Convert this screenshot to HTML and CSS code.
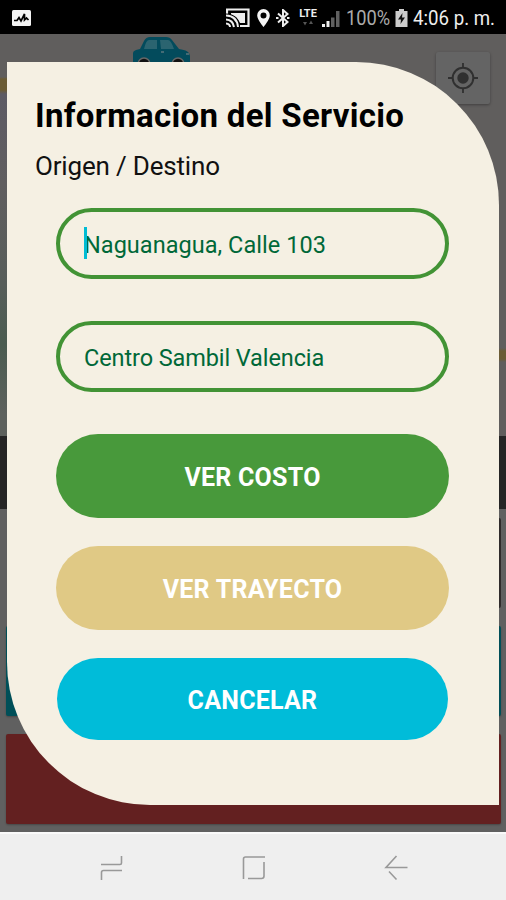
FILE: index.html
```
<!DOCTYPE html>
<html lang="es">
    <head>
        <meta charset="utf-8">
        <meta name="viewport" content="width=device-width, initial-scale=1">
        <title>Informacion del Servicio</title>

        <link rel="stylesheet" href="styles.css">
    </head>

    <body>
        <header class="status">
            <svg class="gallery" width="19" height="16" viewBox="0 0 19 16">
                <rect width="19" height="16" rx="1.5" fill="#f4f4f4"/>
                <path d="M2 10.500h3l2-3 2 3.500 3.500-7v6l2-2 2 2" fill="none" stroke="#000" stroke-width="1.700"/>
            </svg>
            <svg class="cast" width="24" height="20" viewBox="0 0 24 20">
                <path d="M1 7V1.500h21.500V18H14" fill="none" stroke="#eee" stroke-width="2.200"/>
                <path d="M5 5h14v10h-5Q11 8 5 7z" fill="#eee"/>
                <path d="M0 7.500Q11 8 12 19M0 11.500Q7 12 8 19M0 15.500Q4 16 4 19" fill="none" stroke="#000" stroke-width="4"/>
                <path d="M0 7.500Q11 8 12 19M0 11.500Q7 12 8 19M0 15.500Q4 16 4 19" fill="none" stroke="#eee" stroke-width="2"/>
            </svg>
            <svg class="pin" width="13" height="18" viewBox="0 0 13 18">
                <path d="M6.500 0a6.300 6.300 0 0 0-6.300 6.500C.2 10.500 6.500 18 6.500 18s6.300-7.500 6.300-11.500A6.300 6.300 0 0 0 6.500 0zm0 3.500a3 3 0 1 1 0 6 3 3 0 0 1 0-6z" fill="#f4f4f4"/>
            </svg>
            <svg class="bluetooth" width="14" height="18" viewBox="0 0 14 18">
                <path d="M2 4.500l9.500 8.500-4.500 4V1l4.500 4L2 13.500" fill="none" stroke="#eee" stroke-width="2"/>
                <path d="M0 9h2.500M11 9h2.500" stroke="#eee" stroke-width="2"/>
            </svg>
            <span class="lte">
                <b>LTE</b>
                <svg width="10" height="6" viewBox="0 0 10 6">
                    <path d="M0 2h4L2 5.500zM6 4h4L8 .5z" fill="#555"/>
                </svg>
            </span>
            <svg class="signal" width="18" height="17" viewBox="0 0 18 17">
                <path d="M0 14h3v3H0zM4.500 11h3v6h-3z" fill="#eee"/>
                <path d="M9 7.500h3.500V17H9zM14 1h3.500v16H14z" fill="#606060"/>
            </svg>
            <span class="percent"><span>100%</span></span>
            <svg class="battery" width="13" height="18" viewBox="0 0 13 18">
                <path d="M4 0h5v2h3.500v16H.5V2H4z" fill="#ccc"/>
                <path d="M7.500 4L3 10.500h3L5.500 15 10 8.500H7z" fill="#111"/>
            </svg>
            <span class="time"><span>4:06 p. m.</span></span>
        </header>

        <main class="screen">
            <div class="map">
                <svg class="car" width="60" height="32" viewBox="0 0 60 32">
                    <path d="M1 29V17q0-2 3-3l4-1 4-8q2-4 6-4h16q4 0 6 3l7 9q8 1 10 4l1 3v7q0 3-3 3H4q-3 0-3-3z" fill="#034b5c"/>
                    <path d="M12 13q2-9 5-9h8v9zM28 4h8q3 0 6 9H29z" fill="#2b6470"/>
                    <path d="M54 18h3M29 16h3" stroke="#5b777e" stroke-width="1.500"/>
                    <circle cx="12" cy="28" r="6" fill="#111" stroke="#666" stroke-width="1.500"/>
                    <circle cx="46" cy="28" r="6" fill="#111" stroke="#666" stroke-width="1.500"/>
                </svg>
                <div class="locate">
                    <svg width="30" height="30" viewBox="0 0 30 30">
                        <circle cx="15" cy="15" r="10.300" fill="none" stroke="#303030" stroke-width="2"/>
                        <circle cx="15" cy="15" r="5.700" fill="#303030"/>
                        <path d="M15 0v5M15 25v5M0 15h5M25 15h5" stroke="#303030" stroke-width="1.800"/>
                    </svg>
                </div>
            </div>
            <div class="bar"></div>
            <div class="options">
                <div class="option grey"></div>
                <div class="option teal"></div>
                <div class="option red"></div>
            </div>

            <section class="dialog">
                <h1>Informacion del Servicio</h1>
                <h2>Origen / Destino</h2>
                <div class="field focused"><span class="origin">Naguanagua, Calle 103</span></div>
                <div class="field"><span class="destination">Centro Sambil Valencia</span></div>
                <button class="cost">VER COSTO</button>
                <button class="route">VER TRAYECTO</button>
                <button class="cancel">CANCELAR</button>
            </section>
        </main>

        <nav class="keys">
            <svg width="24" height="26" viewBox="0 0 24 26">
                <path d="M1 9.500h19q1.500 0 1.500-1.500V1M1.500 25v-7.500q0-2 2-2H22" />
            </svg>
            <svg width="24" height="26" viewBox="0 0 24 26">
                <path d="M1.500 24V4q0-2 2-2H23M22 7v14q0 2.500-2.500 2.500H6" />
            </svg>
            <svg width="24" height="26" viewBox="0 0 24 26">
                <path d="M12.500 1L2 12.500H23.500M5 16.500l7.500 8" />
            </svg>
        </nav>
    </body>
</html>
```

FILE: styles.css
```
* {
    box-sizing: border-box;
}

body {
    display: flex;
    flex-direction: column;
    height: 900px;
    margin: 0;
    overflow: hidden;
    font-family: Roboto, sans-serif;
    background: #efefef;
}

svg {
    display: block;
    flex: none;
}

/* status bar */
.status {
    display: flex;
    align-items: center;
    height: 34px;
    padding: 2px 11px 0 12px;
    color: #eee;
    background: #000;
    font-size: 21px;
}

.cast {
    margin-left: auto;
}

.pin {
    margin-left: 7px;
}

.bluetooth {
    margin-left: 6px;
}

.lte {
    display: flex;
    flex-direction: column;
    align-items: center;
    width: 20px;
    height: 20px;
    margin-left: 8px;
    font-size: 11px;
    line-height: 12px;
}

.signal {
    margin-left: 4px;
}

.percent, .time {
    white-space: nowrap;
}

.percent span, .time span {
    display: block;
    transform-origin: left;
}

.percent {
    width: 43px;
    margin-left: 6px;
    color: #aaa;
}

.percent span {
    transform: scaleX(.87);
}

.battery {
    margin-left: 6px;
}

.time {
    width: 82px;
    margin-left: 5px;
}

.time span {
    transform: scaleX(.89);
}

/* dimmed page behind the dialog */
.screen {
    position: relative;
    height: 798px;
    background: #606060;
}

/* only the edges of the map show, each side has its own strip */
.map {
    position: relative;
    height: 402px;
    background:
        linear-gradient(#605e5d 43px, #6b5c35 45px, #6b5c35 56px, #5d5b64 60px, #605e5f 150px, #575d59 250px, #4b5c50 310px, #5d615d 380px) left / 8px 100% no-repeat,
        linear-gradient(#605e5d 314px, #6b5c35 317px, #6b5c35 325px, #605e5d 328px);
}

.car {
    position: absolute;
    top: 2px;
    left: 132px;
}

.locate {
    position: absolute;
    top: 18px;
    right: 16px;
    display: grid;
    place-items: center;
    width: 54px;
    height: 52px;
    border-radius: 2px;
    background: #646464;
    box-shadow: 0 1px 3px #0005;
}

.bar {
    height: 73px;
    background: #252525;
}

.options {
    display: flex;
    flex-direction: column;
    gap: 18px;
    padding: 9px 5px 0 6px;
}

.option {
    height: 90px;
    border-radius: 2px;
    box-shadow: 0 1px 2px #0004;
}

.grey {
    background: linear-gradient(to right, #606060 50%, #2f2b2b 50%);
    box-shadow: none;
}

.teal {
    background: #004f58;
}

.red {
    background: #632020;
}

/* dialog */
.dialog {
    position: absolute;
    top: 28px;
    left: 7px;
    display: flex;
    flex-direction: column;
    width: 492px;
    height: 743px;
    padding: 34px 50px 0 49px;
    border-radius: 0 143px 0 143px;
    background: #f5f0e3;
}

h1, h2 {
    margin: 0 0 0 -21px;
    color: #000;
    white-space: nowrap;
}

h1 {
    font-size: 33px;
    letter-spacing: .3px;
    line-height: 40px;
}

h2 {
    margin-top: 12px;
    font-size: 26px;
    font-weight: normal;
    letter-spacing: -.18px;
    line-height: 36px;
    color: #111;
}

.field {
    display: flex;
    align-items: center;
    height: 71px;
    margin-top: 42px;
    padding: 2px 0 0 24px;
    border: 4px solid #429335;
    border-radius: 36px;
    font-size: 23.5px;
    color: #006838;
}

.focused {
    position: relative;
    margin-top: 24px;
}

.origin {
    letter-spacing: .04px;
}

.destination {
    letter-spacing: -.1px;
}

/* text cursor */
.focused::before {
    content: "";
    position: absolute;
    top: 15px;
    left: 24px;
    width: 3px;
    height: 32px;
    background: #00bcd4;
}

button {
    height: 84px;
    margin: 0 0 28px;
    padding: 2px 0 0;
    border: none;
    border-radius: 42px;
    font-family: inherit;
    font-size: 25px;
    font-weight: bold;
    letter-spacing: .25px;
    color: #fff;
}

.cost {
    margin-top: 42px;
    background: #48993b;
}

.route {
    background: #e0c985;
}

.cancel {
    height: 82px;
    margin: 0 1px;
    background: #00bcd9;
}

/* navigation keys */
.keys {
    display: flex;
    justify-content: space-between;
    height: 68px;
    padding: 21px 98px 0 100px;
    border-top: 2px solid #fafafa;
    background: #efefef;
}

.keys path {
    fill: none;
    stroke: #999;
    stroke-width: 1.6;
}
```
